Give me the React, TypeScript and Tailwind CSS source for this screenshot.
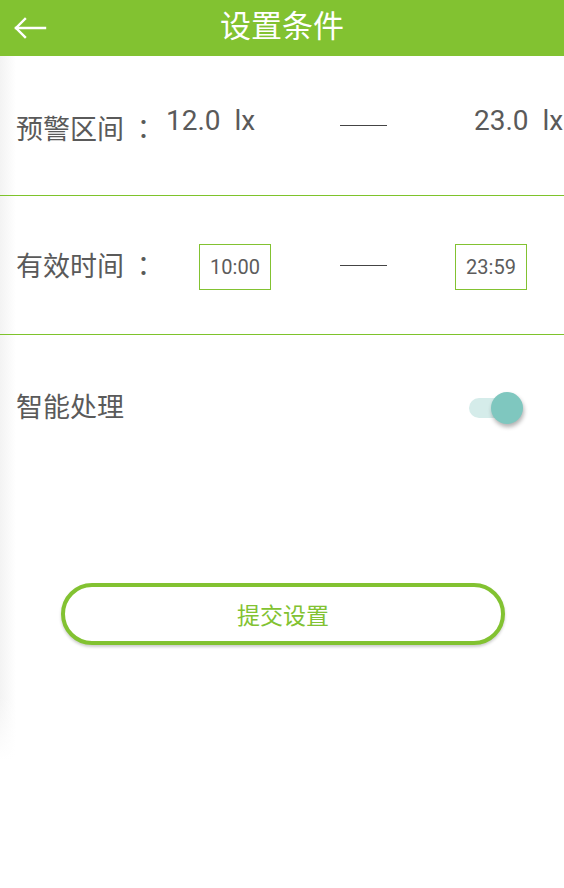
const cjk = "font-['Noto_Sans_CJK_SC','Noto_Sans',sans-serif]";
const colonFont = "font-['Noto_Sans_CJK_TC','Noto_Sans',sans-serif]";
const num = "font-['Roboto','Noto_Sans_CJK_SC',sans-serif]";

function Dash() {
  return <div className="h-px w-[47px] bg-[#444444]" />;
}

function Label({ text }: { text: string }) {
  return (
    <span className={`flex items-center text-[27px] ${cjk}`}>
      {text}
      <span className={`ml-[6px] ${colonFont}`}>：</span>
    </span>
  );
}

function TimeBox({ value }: { value: string }) {
  return (
    <div
      className={`flex h-[46px] w-[72px] items-center justify-center border border-[#82c231] text-[20px] text-[#5c5c5c] ${num}`}
    >
      {value}
    </div>
  );
}

export default function App() {
  return (
    <div className="flex h-[888px] w-[564px] flex-col bg-white">
      <header className="flex h-[56px] shrink-0 items-center bg-[#82c231] px-[13px]">
        <svg width="34" height="24" viewBox="0 0 34 24" fill="none" stroke="white" strokeWidth="2.4" strokeLinecap="square">
          <path d="M3 12H32" />
          <path d="M12 3L3 12L12 21" />
        </svg>
        <h1 className={`-ml-[34px] -mt-[8px] flex-1 text-center text-[31px] text-white ${cjk}`}>设置条件</h1>
      </header>

      <main className="flex h-[704px] flex-col bg-[linear-gradient(to_bottom,rgba(255,255,255,0)_640px,#ffffff_704px),linear-gradient(to_right,#f3f3f3,#ffffff_16px)]">
        <section className="flex h-[139px] items-center pl-[16px] text-[#5a5a5a]">
          <div className="mt-[6px] w-[150px]">
            <Label text="预警区间" />
          </div>
          <span className={`-mt-[10px] w-[174px] whitespace-nowrap text-[28px] ${num}`}>12.0&nbsp; lx</span>
          <Dash />
          <span className={`ml-[87px] -mt-[10px] whitespace-nowrap text-[28px] ${num}`}>23.0&nbsp; lx</span>
        </section>
        <div className="h-px bg-[#7ec32b]" />

        <section className="flex h-[138px] items-center pl-[16px] text-[#5a5a5a]">
          <div className="w-[183px]">
            <Label text="有效时间" />
          </div>
          <div className="mt-[4px]">
            <TimeBox value="10:00" />
          </div>
          <div className="ml-[69px]">
            <Dash />
          </div>
          <div className="ml-[68px] mt-[4px]">
            <TimeBox value="23:59" />
          </div>
        </section>
        <div className="h-px bg-[#7ec32b]" />

        <section className="flex h-[145px] items-center justify-between pl-[16px] pr-[59px] text-[#5a5a5a]">
          <span className={`-mt-[2px] text-[27px] ${cjk}`}>智能处理</span>
          <div className="relative h-[20px] w-[36px] rounded-full bg-[#d5ecea]">
            <div className="absolute -right-[18px] -top-[6px] h-[32px] w-[32px] rounded-full bg-[#7fc7bf] shadow-[1px_3px_4px_rgba(0,0,0,0.3)]" />
          </div>
        </section>

        <div className="mt-[103px] flex justify-center pl-[2px]">
          <button
            className={`flex h-[62px] w-[444px] items-center justify-center rounded-full border-[4px] border-[#82c231] bg-white text-[23px] text-[#82c231] shadow-[0_2px_3px_rgba(0,0,0,0.2)] ${cjk}`}
          >
            提交设置
          </button>
        </div>
      </main>
    </div>
  );
}
